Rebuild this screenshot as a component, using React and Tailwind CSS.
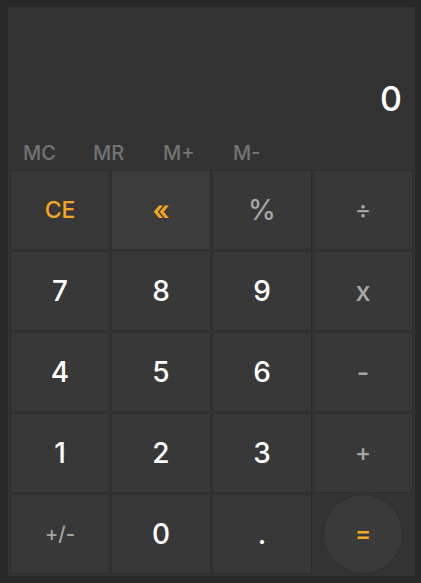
import { useState } from "react";

const keys = [
  { label: "CE", tone: "accent", size: "text-[23px]" },
  { label: "«", tone: "accent", size: "text-[27px] font-semibold", lit: true },
  { label: "%", tone: "op", size: "text-[28px]" },
  { label: "÷", tone: "op", size: "text-[24px]" },
  { label: "7" },
  { label: "8" },
  { label: "9" },
  { label: "x", tone: "op", size: "text-[27px]" },
  { label: "4" },
  { label: "5" },
  { label: "6" },
  { label: "-", tone: "op", size: "text-[27px]" },
  { label: "1" },
  { label: "2" },
  { label: "3" },
  { label: "+", tone: "op", size: "text-[24px]" },
  { label: "+/-", tone: "op", size: "text-[20px]" },
  { label: "0" },
  { label: "." },
];

const toneClass = {
  accent: "text-[#f5a623]",
  op: "text-[#a6a6a6]",
  num: "text-white",
};

export default function App() {
  const [display] = useState("0");

  return (
    <div
      className="min-h-screen bg-[#282828] pt-[7px] pl-2 pr-[6px] pb-[7px]"
      style={{ fontFamily: "Inter, 'Open Sans', sans-serif" }}
    >
      <div className="h-[569px] bg-[#333333] flex flex-col">
        <div className="h-[135px] flex items-end justify-end pr-[13px] pb-[26px]">
          <span className="text-[34px] font-medium leading-none text-white">{display}</span>
        </div>

        <div className="h-[28px] flex items-start pt-px pl-[15px]">
          {["MC", "MR", "M+", "M-"].map((m) => (
            <button
              key={m}
              className="w-[70px] text-left text-[20px] font-medium leading-none text-[#737373]"
            >
              {m}
            </button>
          ))}
        </div>

        <div className="grid grid-cols-4 auto-rows-[80px] gap-px px-[2px]">
          {keys.map((k) => (
            <button
              key={k.label}
              className={`flex items-center justify-center border border-[#2d2d2d] font-medium leading-none ${
                k.lit ? "bg-[#3c3c3c]" : "bg-[#383838]"
              } ${toneClass[k.tone || "num"]} ${k.size || "text-[28px]"}`}
            >
              {k.label}
            </button>
          ))}
          <div className="flex items-center justify-center">
            <button className="w-[80px] h-[80px] rounded-full bg-[#3a3a3a] border border-[#2f2f2f] text-[#f5a623] text-[24px] font-semibold leading-none">
              =
            </button>
          </div>
        </div>
      </div>
    </div>
  );
}
